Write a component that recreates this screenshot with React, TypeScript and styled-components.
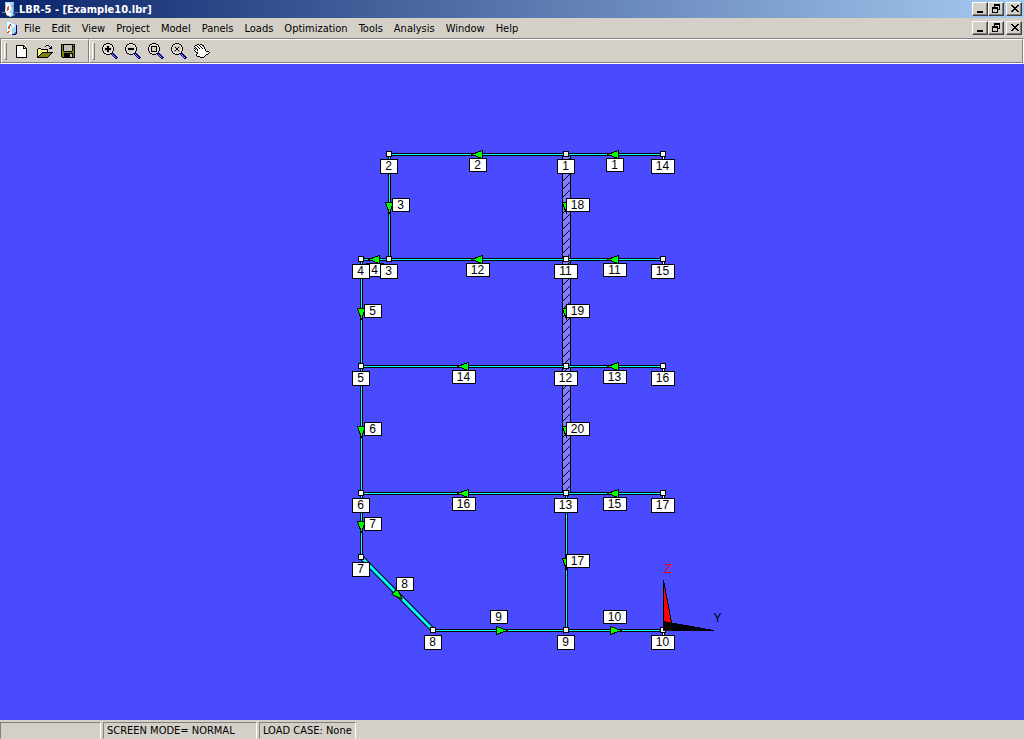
import React from "react";
import styled, { createGlobalStyle } from "styled-components";

const face = "#d4d0c8";
const shadow = "#808080";
const uiFont = '"DejaVu Sans Condensed", "DejaVu Sans", "Liberation Sans", sans-serif';

const GlobalStyle = createGlobalStyle`
  * { box-sizing: border-box; }
  body { margin: 0; background: ${face}; }
`;

const Shell = styled.div`
  display: flex;
  flex-direction: column;
  min-height: 100vh;
  font-family: ${uiFont};
  font-size: 11px;
  line-height: 14px;
  color: #000;
  background: ${face};
`;

const TitleBar = styled.header`
  display: flex;
  align-items: center;
  height: 18px;
  padding: 0 2px;
  gap: 1px;
  background: linear-gradient(to right, #0a246a, #a6caf0);
`;

const Title = styled.h1`
  flex: 1;
  margin: 0;
  padding-top: 1px;
  font-size: 11px;
  font-weight: bold;
  color: #fff;
  white-space: nowrap;
`;

const MenuBar = styled.nav`
  display: flex;
  align-items: center;
  height: 20px;
  padding: 0 2px 0 6px;
`;

const MenuList = styled.div`
  display: flex;
  flex: 1;
  gap: 1px;
  padding: 1px 0 0 2px;
`;

const MenuItem = styled.button`
  padding: 0 5px;
  border: 0;
  background: none;
  font: inherit;
  color: inherit;
  white-space: nowrap;
`;

const WindowControls = styled.div`
  display: flex;
`;

const ControlButton = styled.button<{ $apart?: boolean }>`
  display: flex;
  width: 16px;
  height: 14px;
  padding: 1px 0 0 2px;
  margin-left: ${(p) => (p.$apart ? 2 : 0)}px;
  border: 1px solid;
  border-color: #fff #404040 #404040 #fff;
  box-shadow: inset -1px -1px 0 ${shadow};
  background: ${face};
`;

const ToolbarRow = styled.div`
  display: flex;
  height: 26px;
  border: 1px solid;
  border-color: ${shadow} #fff #fff ${shadow};
`;

const Toolbar = styled.div<{ $grow?: boolean }>`
  display: flex;
  align-items: center;
  flex: ${(p) => (p.$grow ? "1" : "0 0 88px")};
  padding-left: 2px;
  border: 1px solid;
  border-color: #fff ${shadow} ${shadow} #fff;
`;

const Grip = styled.span`
  width: 3px;
  height: 18px;
  margin-right: 4px;
  border: 1px solid;
  border-color: #fff ${shadow} ${shadow} #fff;
`;

const ToolButton = styled.button`
  display: flex;
  align-items: center;
  justify-content: center;
  width: 23px;
  height: 22px;
  padding: 0 4px 0 3px;
  border: 0;
  background: none;
`;

const Workspace = styled.main`
  display: flex;
  flex: 1;
  min-height: 0;
  background: #4a4aff;
`;

const Diagram = styled.svg`
  display: block;
  flex: 1;
  min-width: 0;
  font-family: "Liberation Sans", Arial, sans-serif;
  font-size: 12px;
`;

const StatusBar = styled.footer`
  display: flex;
  gap: 2px;
  height: 19px;
  padding-top: 2px;
`;

const StatusPanel = styled.div<{ $width: number }>`
  width: ${(p) => p.$width}px;
  padding: 1px 0 0 3px;
  border: 1px solid;
  border-color: ${shadow} #fff ${face} ${shadow};
  white-space: nowrap;
  overflow: hidden;
`;

/* Pixel icons: one character for each pixel, "." is transparent. */
const palette: Record<string, string> = {
  "#": "#000000",
  w: "#ffffff",
  y: "#ffff00",
  o: "#808000",
  n: "#000080",
  b: "#8098e8",
  g: "#808080",
  s: "#c0c0c0",
  c: "#a8d8f8",
  d: "#3068a8",
  r: "#e06020",
};

function PixelIcon({ rows }: { rows: string[] }) {
  const width = Math.max(...rows.map((r) => r.length));
  return (
    <svg width={width} height={rows.length} shapeRendering="crispEdges" aria-hidden="true">
      {rows.flatMap((row, y) =>
        [...row].map((ch, x) =>
          palette[ch] ? <rect key={`${x}-${y}`} x={x} y={y} width={1} height={1} fill={palette[ch]} /> : null
        )
      )}
    </svg>
  );
}

const newIcon = [
  "########....",
  "#wwwwww##...",
  "#wwwwww#w#..",
  "#wwwwww####.",
  "#wwwwwwwww#.",
  "#wwwwwwwww#.",
  "#wwwwwwwww#.",
  "#wwwwwwwww#.",
  "#wwwwwwwww#.",
  "#wwwwwwwww#.",
  "#wwwwwwwww#.",
  "#wwwwwwwww#.",
  "###########.",
];

const openIcon = [
  ".........###....",
  "........#...#.#.",
  ".............##.",
  ".###........###.",
  "#wyw#######.....",
  "#ywywywywy#.....",
  "#wywywywyw#.....",
  "#ywyw###########",
  "#wyw#ooooooooo#.",
  "#yw#ooooooooo#..",
  "#w#ooooooooo#...",
  "##ooooooooo#....",
  "###########.....",
];

const saveIcon = [
  "##############",
  "#o#ssssssss#s#",
  "#o#ssssssss###",
  "#o#ssssssss#o#",
  "#o#ssssssss#o#",
  "#o#ssssssss#o#",
  "#o#ssssssss#o#",
  "#oo########oo#",
  "#oooooooooooo#",
  "#oo#########o#",
  "#oo######ss#o#",
  "#oo######ss#o#",
  "#oo######ss#o#",
  ".#############",
];

const lens = [
  "....####........",
  "..##w.w.##......",
  ".#.w....w.#.....",
  ".#w......w#.....",
  "#w........w#....",
  "#..........#....",
  "#w........w#....",
  "#..........#....",
  ".#w......w#.....",
  ".#.w....w.#.....",
  "..##w.w.##nn....",
  "....####.nbnn...",
  "..........nbnn..",
  "...........nbnn.",
  "............nbnn",
  ".............nn.",
];

function withMark(mark: string[]) {
  return lens.map((row, y) => {
    const m = mark[y - 3];
    if (!m) return row;
    return [...row].map((ch, x) => (m[x - 3] && m[x - 3] !== "." ? m[x - 3] : ch)).join("");
  });
}

const zoomInIcon = withMark(["..##..", "..##..", "######", "######", "..##..", "..##.."]);
const zoomOutIcon = withMark(["......", "......", "######", "######"]);
const zoomWindowIcon = withMark(["######", "#....#", "#....#", "#....#", "#....#", "######"]);
const zoomAllIcon = withMark(["g....g", ".#..#.", "..##..", "..##..", ".#..#.", "g....g"]);

const handIcon = [
  "...##.##........",
  ".##ww#ww##......",
  "#ww#ww#ww#......",
  ".#ww#ww#ww#.....",
  "#.#ww#ww#w#.....",
  "w#.#wwwwwww#....",
  "#ww#wwwwwww#....",
  ".#wwwwwwwwww###.",
  "..##wwwwwwwwwww#",
  "...#wwwwwwwwww#.",
  "..#wwwwwwwww##..",
  "..#wwwwwwww#....",
  "...###wwww#.....",
  "......####......",
];

const minimizeIcon = ["", "", "", "", "", "", "", "..######", "..######"];
const restoreIcon = [
  "...######",
  "...######",
  "...#....#",
  ".######.#",
  ".######.#",
  ".#....###",
  ".#....#..",
  ".#....#..",
  ".######..",
];
const closeIcon = [
  "",
  "..##....##",
  "...##..##.",
  "....####..",
  ".....##...",
  "....####..",
  "...##..##.",
  "..##....##",
];

const appIcon = [
  "...ccccccccc....",
  "...cwwwccccb....",
  "...cwwwwcccb....",
  "...bwwwwccbb....",
  "...bwwrwwcbb....",
  "...cwrrwwccb....",
  "...cwrrwwccb....",
  "...cwrrwwccb....",
  "...cwrwwcccb....",
  "...wwwwwcccb....",
  "ggggwwwccccddggg",
  "....wwwwwccd....",
  "....swwwwcccd...",
  ".....sswwccdd...",
  ".......ssdd.....",
];

const docIcon = [
  "cccc.......",
  "cwwwcc.....",
  "cwwwwwcc...",
  "cwwcdwwwcc.",
  "cwwrdcwwwcn",
  "cwrrwccwwcn",
  "cwrrwwccccn",
  "cwrrwwccccn",
  "cwwwwcccccn",
  "bwwwccccccn",
  "swrrwwccccn",
  "srrwwwcccdn",
  ".sswwwccddn",
  "...sswnnnn.",
];

function Controls({ target }: { target: string }) {
  return (
    <WindowControls>
      <ControlButton aria-label={`Minimize ${target}`}><PixelIcon rows={minimizeIcon} /></ControlButton>
      <ControlButton aria-label={`Restore ${target}`}><PixelIcon rows={restoreIcon} /></ControlButton>
      <ControlButton $apart aria-label={`Close ${target}`}><PixelIcon rows={closeIcon} /></ControlButton>
    </WindowControls>
  );
}

/* Structural model, in canvas coordinates. */
type Point = [number, number];

const nodes: Record<number, Point> = {
  1: [566, 90], 2: [389, 90], 3: [389, 195], 4: [361, 195],
  5: [361, 302], 6: [361, 429], 7: [361, 493], 8: [433, 566],
  9: [566, 566], 10: [663, 566], 11: [566, 195], 12: [566, 302],
  13: [566, 429], 14: [663, 90], 15: [663, 195], 16: [663, 302], 17: [663, 429],
};

type Direction = "left" | "right" | "down" | "slant";

interface Panel {
  id: number;
  from: number;
  to: number;
  dir: Direction;
  arrow: Point;
  label: Point;
  wall?: boolean;
}

/* `arrow` is the middle of the arrow's base, `label` the label's top left corner. */
const panels: Panel[] = [
  { id: 1, from: 14, to: 1, dir: "left", arrow: [618, 90], label: [606, 94] },
  { id: 2, from: 1, to: 2, dir: "left", arrow: [482, 90], label: [469, 94] },
  { id: 3, from: 2, to: 3, dir: "down", arrow: [389, 138], label: [392, 134] },
  { id: 4, from: 3, to: 4, dir: "left", arrow: [379, 195], label: [366, 199] },
  { id: 5, from: 4, to: 5, dir: "down", arrow: [361, 244], label: [364, 240] },
  { id: 6, from: 5, to: 6, dir: "down", arrow: [361, 362], label: [364, 358] },
  { id: 7, from: 6, to: 7, dir: "down", arrow: [361, 457], label: [364, 453] },
  { id: 8, from: 7, to: 8, dir: "slant", arrow: [394, 527], label: [396, 513] },
  { id: 9, from: 8, to: 9, dir: "right", arrow: [496, 566], label: [490, 546] },
  { id: 10, from: 9, to: 10, dir: "right", arrow: [610, 566], label: [603, 546] },
  { id: 11, from: 15, to: 11, dir: "left", arrow: [618, 195], label: [603, 199] },
  { id: 12, from: 11, to: 3, dir: "left", arrow: [482, 195], label: [466, 199] },
  { id: 13, from: 16, to: 12, dir: "left", arrow: [618, 302], label: [603, 306] },
  { id: 14, from: 12, to: 5, dir: "left", arrow: [468, 302], label: [452, 306] },
  { id: 15, from: 17, to: 13, dir: "left", arrow: [618, 429], label: [603, 433] },
  { id: 16, from: 13, to: 6, dir: "left", arrow: [468, 429], label: [452, 433] },
  { id: 17, from: 13, to: 9, dir: "down", arrow: [566, 494], label: [566, 490] },
  { id: 18, from: 1, to: 11, dir: "down", arrow: [566, 138], label: [566, 134], wall: true },
  { id: 19, from: 11, to: 12, dir: "down", arrow: [566, 244], label: [566, 240], wall: true },
  { id: 20, from: 12, to: 13, dir: "down", arrow: [566, 362], label: [566, 358], wall: true },
];

const angles: Record<Direction, number> = { right: 0, slant: 45, down: 90, left: 180 };

function Beam({ from, to }: { from: Point; to: Point }) {
  const slanted = from[0] !== to[0] && from[1] !== to[1];
  const ends = { x1: from[0], y1: from[1], x2: to[0], y2: to[1] };
  return (
    <g shapeRendering={slanted ? "auto" : "crispEdges"}>
      <line {...ends} stroke="#000" strokeWidth={slanted ? 5 : 3} />
      <line {...ends} stroke="#00ffff" strokeWidth={slanted ? 3 : 1} />
    </g>
  );
}

function Arrow({ at, dir }: { at: Point; dir: Direction }) {
  return (
    <g transform={`translate(${at[0]} ${at[1]}) rotate(${angles[dir]})`}>
      <path d="M0 -4 L0 4 L11 0 Z" fill="#00ff00" stroke="#000" strokeLinejoin="bevel" shapeRendering="crispEdges" />
    </g>
  );
}

function Tag({ x, y, height, value }: { x: number; y: number; height: number; value: number }) {
  const width = value > 9 ? 24 : 18;
  return (
    <g>
      <rect x={x} y={y} width={width - 1} height={height - 1} fill="#fff" stroke="#000" shapeRendering="crispEdges" />
      <text x={x + width / 2 - 1} y={y + 10} textAnchor="middle">{value}</text>
    </g>
  );
}

function Model() {
  const all = Object.entries(nodes);
  return (
    <Diagram viewBox="0 0 1024 656" role="img" aria-label="Mesh of panels and nodes">
      <defs>
        <pattern id="hatch" width="8" height="8" patternUnits="userSpaceOnUse" patternTransform="translate(-0.5 -0.5)">
          <rect width="8" height="8" fill="#8080ff" />
          {[0, 1, 2, 3, 4, 5, 6, 7].map((i) => (
            <rect key={i} x={i} y={7 - i} width="1" height="1" shapeRendering="crispEdges" />
          ))}
        </pattern>
      </defs>
      <g transform="translate(0.5 0.5)">
        {panels.filter((p) => p.wall).map((p) => {
          const [x, top] = nodes[p.from];
          return (
            <rect key={p.id} x={x - 4} y={top} width={8} height={nodes[p.to][1] - top}
              fill="url(#hatch)" stroke="#000" shapeRendering="crispEdges" />
          );
        })}
        {panels.filter((p) => !p.wall).map((p) => (
          <Beam key={p.id} from={nodes[p.from]} to={nodes[p.to]} />
        ))}
        {[10, 14, 15, 16, 17].map((id) => (
          <g key={id} shapeRendering="crispEdges">
            <path d={`M${nodes[id][0]} ${nodes[id][1]} v6`} stroke="#000" strokeWidth={3} />
            <path d={`M${nodes[id][0]} ${nodes[id][1]} v6`} stroke="#fff" />
          </g>
        ))}
        {panels.map((p) => <Arrow key={p.id} at={p.arrow} dir={p.dir} />)}
        {panels.map((p) => <Tag key={p.id} x={p.label[0]} y={p.label[1]} height={14} value={p.id} />)}
        {all.map(([id, [x, y]]) => (
          <g key={id}>
            <rect x={x - 3} y={y - 3} width={5} height={5} fill="#fff" stroke="#000" shapeRendering="crispEdges" />
            <Tag x={x - (Number(id) > 9 ? 12 : 9)} y={y + 5} height={15} value={Number(id)} />
          </g>
        ))}
        <g shapeRendering="crispEdges">
          <path d="M663 516 L663 558 L671 558 Z" fill="#ff0000" stroke="#000" />
          <path d="M663 557 L663 566 L713 566 Z" fill="#000" stroke="#000" />
        </g>
        <text x="664" y="508" fill="#ff0000">Z</text>
        <text x="713" y="557">Y</text>
      </g>
    </Diagram>
  );
}

const menus = [
  "File", "Edit", "View", "Project", "Model", "Panels", "Loads",
  "Optimization", "Tools", "Analysis", "Window", "Help",
];

const fileTools = [
  { name: "New", rows: newIcon },
  { name: "Open", rows: openIcon },
  { name: "Save", rows: saveIcon },
];

const viewTools = [
  { name: "Zoom in", rows: zoomInIcon },
  { name: "Zoom out", rows: zoomOutIcon },
  { name: "Zoom window", rows: zoomWindowIcon },
  { name: "Zoom all", rows: zoomAllIcon },
  { name: "Pan", rows: handIcon },
];

export default function App() {
  return (
    <Shell>
      <GlobalStyle />
      <TitleBar>
        <PixelIcon rows={appIcon} />
        <Title>LBR-5 - [Example10.lbr]</Title>
        <Controls target="application" />
      </TitleBar>
      <MenuBar aria-label="Main menu">
        <PixelIcon rows={docIcon} />
        <MenuList>
          {menus.map((m) => <MenuItem key={m}>{m}</MenuItem>)}
        </MenuList>
        <Controls target="document" />
      </MenuBar>
      <ToolbarRow>
        <Toolbar role="toolbar" aria-label="File">
          <Grip />
          {fileTools.map((t) => (
            <ToolButton key={t.name} aria-label={t.name}><PixelIcon rows={t.rows} /></ToolButton>
          ))}
        </Toolbar>
        <Toolbar $grow role="toolbar" aria-label="View">
          <Grip />
          {viewTools.map((t) => (
            <ToolButton key={t.name} aria-label={t.name}><PixelIcon rows={t.rows} /></ToolButton>
          ))}
        </Toolbar>
      </ToolbarRow>
      <Workspace>
        <Model />
      </Workspace>
      <StatusBar>
        <StatusPanel $width={101} />
        <StatusPanel $width={154}>SCREEN MODE= NORMAL</StatusPanel>
        <StatusPanel $width={97}>LOAD CASE: None</StatusPanel>
      </StatusBar>
    </Shell>
  );
}
